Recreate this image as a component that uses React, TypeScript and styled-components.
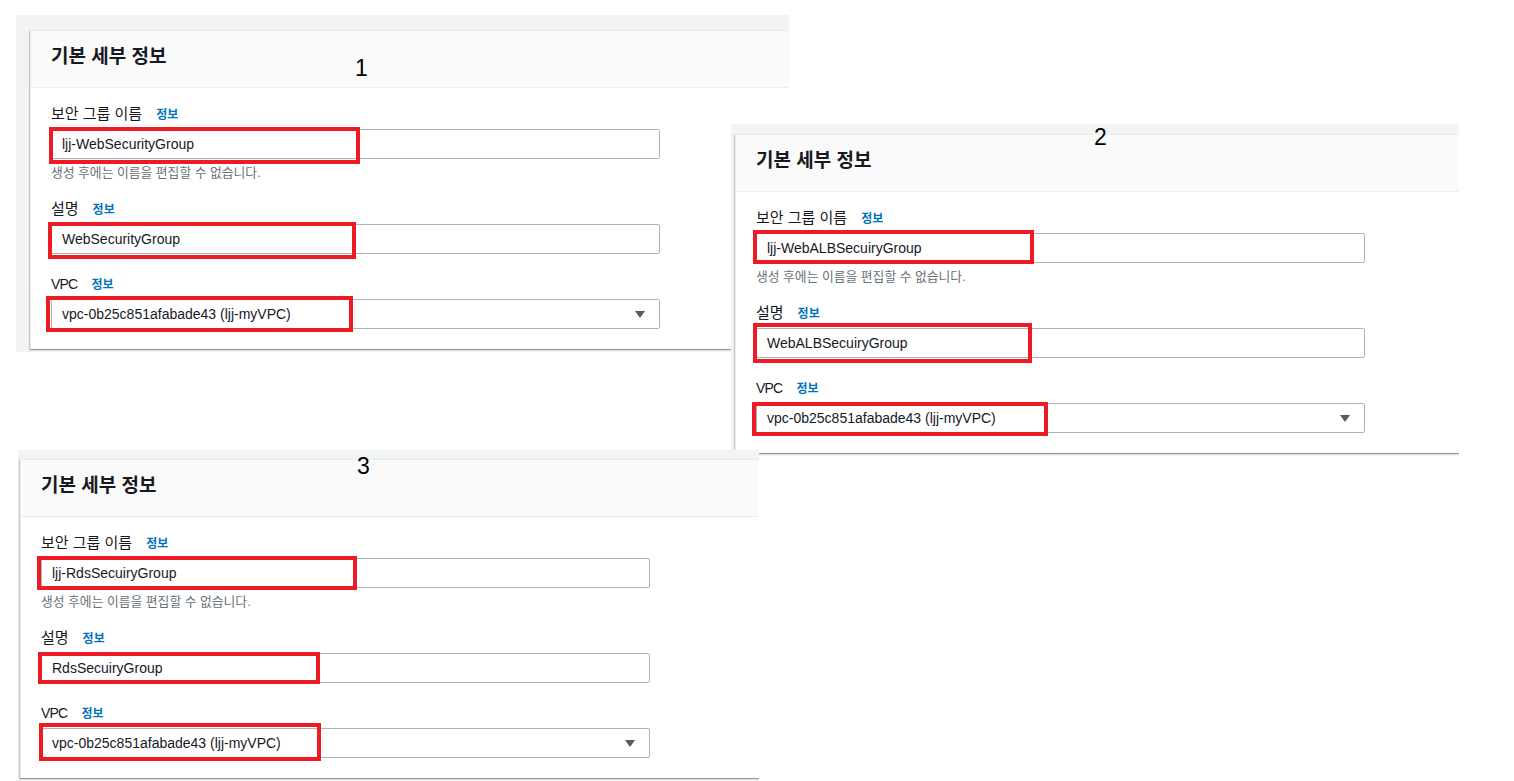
import React, { FC } from 'react';
import styled, { createGlobalStyle } from 'styled-components';

const GlobalStyle = createGlobalStyle`
  html, body {
    margin: 0;
    padding: 0;
    background: #ffffff;
  }
  body {
    font-family: "Liberation Sans", "Noto Sans CJK KR", sans-serif;
    color: #16191f;
  }
`

const Canvas = styled.div`
  position: relative;
  width: 1514px;
  height: 781px;
  overflow: hidden;
  background: #ffffff;
`

// each screenshot clipping pasted onto the canvas
const Shot = styled.section<{ $left: number; $top: number; $width: number; $height: number; $padTop: number; $padLeft: number; $z: number }>`
  position: absolute;
  left: ${p => p.$left}px;
  top: ${p => p.$top}px;
  width: ${p => p.$width}px;
  height: ${p => p.$height}px;
  z-index: ${p => p.$z};
  box-sizing: border-box;
  padding: ${p => p.$padTop}px 0 2px ${p => p.$padLeft}px;
  background: #f2f3f3;
  overflow: hidden;
`

const Card = styled.div`
  margin-right: -30px;
  background: #ffffff;
  border-top: 1px solid #eaeded;
  border-left: 1px solid #eaeded;
  box-shadow: 0 1px 1px 0 rgba(0, 28, 36, 0.3), -1px 1px 1px 0 rgba(0, 28, 36, 0.15);
`

const CardHeader = styled.header`
  height: 22px;
  padding: 15px 20px 19px 20px;
  background: #fafafa;
  border-bottom: 1px solid #eaeded;
`

const CardTitle = styled.h2`
  margin: 0;
  font-size: 19px;
  line-height: 22px;
  font-weight: 700;
  color: #16191f;
`

const CardBody = styled.div`
  display: flex;
  flex-direction: column;
  gap: 19px;
  padding: 15px 20px 20px 20px;
`

const Field = styled.div`
  display: flex;
  flex-direction: column;
`

const LabelRow = styled.div`
  display: flex;
  align-items: baseline;
  gap: 14px;
  height: 22px;
  margin-bottom: 4px;
`

const Label = styled.span<{ $latin?: boolean }>`
  font-size: ${p => (p.$latin ? 14 : 15)}px;
  letter-spacing: ${p => (p.$latin ? -0.8 : 0)}px;
  line-height: 22px;
  color: #16191f;
`

const InfoLink = styled.a`
  font-size: 12px;
  font-weight: 700;
  color: #0073bb;
  text-decoration: none;
`

const Control = styled.div`
  position: relative;
  display: flex;
  align-items: center;
  justify-content: space-between;
  width: 609px;
  height: 30px;
  box-sizing: border-box;
  padding: 0 11px 0 10px;
  border: 1px solid #aab7b8;
  border-radius: 2px;
  background: #ffffff;
  font-size: 14px;
  color: #16191f;
`

const Value = styled.span`
  white-space: nowrap;
`

const Caret = styled.svg`
  flex: none;
  width: 16px;
  height: 16px;
  fill: #545b64;
`

const Help = styled.div`
  height: 15px;
  margin-top: 5px;
  font-size: 12.8px;
  line-height: 17px;
  color: #687078;
`

// red rectangle drawn over the screenshot
const Highlight = styled.span<{ $x: number; $y: number; $w: number; $h: number }>`
  position: absolute;
  left: ${p => p.$x - 1}px;
  top: ${p => p.$y - 1}px;
  width: ${p => p.$w}px;
  height: ${p => p.$h}px;
  box-sizing: border-box;
  border: 4px solid #ed1c24;
  pointer-events: none;
`

const Marker = styled.span<{ $left: number; $top: number }>`
  position: absolute;
  left: ${p => p.$left}px;
  top: ${p => p.$top}px;
  z-index: 10;
  font-size: 23px;
  line-height: 1;
  color: #000000;
`

interface IMark { x: number; y: number; w: number; h: number }

interface IFieldData {
  label: string;
  value: string;
  help?: string;
  select?: boolean;
  mark: IMark;
}

interface IShotData {
  left: number;
  top: number;
  width: number;
  height: number;
  padTop: number;
  padLeft: number;
  fields: IFieldData[];
}

const HELP = '생성 후에는 이름을 편집할 수 없습니다.'
const VPC = 'vpc-0b25c851afabade43 (ljj-myVPC)'

const shots: IShotData[] = [
  {
    left: 16, top: 15, width: 773, height: 337, padTop: 15, padLeft: 14,
    fields: [
      { label: '보안 그룹 이름', value: 'ljj-WebSecurityGroup', help: HELP, mark: { x: -2, y: -2, w: 311, h: 37 } },
      { label: '설명', value: 'WebSecurityGroup', mark: { x: -3, y: -2, w: 308, h: 37 } },
      { label: 'VPC', value: VPC, select: true, mark: { x: -5, y: -3, w: 307, h: 36 } },
    ],
  },
  {
    left: 731, top: 124, width: 728, height: 332, padTop: 10, padLeft: 4,
    fields: [
      { label: '보안 그룹 이름', value: 'ljj-WebALBSecuiryGroup', help: HELP, mark: { x: -3, y: -3, w: 281, h: 34 } },
      { label: '설명', value: 'WebALBSecuiryGroup', mark: { x: -3, y: -5, w: 279, h: 40 } },
      { label: 'VPC', value: VPC, select: true, mark: { x: -4, y: -1, w: 296, h: 34 } },
    ],
  },
  {
    left: 18, top: 450, width: 741, height: 340, padTop: 9, padLeft: 2,
    fields: [
      { label: '보안 그룹 이름', value: 'ljj-RdsSecuiryGroup', help: HELP, mark: { x: -4, y: -2, w: 320, h: 34 } },
      { label: '설명', value: 'RdsSecuiryGroup', mark: { x: -3, y: -1, w: 282, h: 32 } },
      { label: 'VPC', value: VPC, select: true, mark: { x: -2, y: -5, w: 282, h: 38 } },
    ],
  },
]

const markers = [
  { text: '1', left: 355, top: 57 },
  { text: '2', left: 1094, top: 126 },
  { text: '3', left: 357, top: 455 },
]

const FormField: FC<{ field: IFieldData }> = ({ field }) => (
  <Field>
    <LabelRow>
      <Label $latin={/^[A-Za-z]+$/.test(field.label)}>{field.label}</Label>
      <InfoLink>정보</InfoLink>
    </LabelRow>
    <Control>
      <Value>{field.value}</Value>
      {field.select && (
        <Caret viewBox="0 0 16 16">
          <path d="M3 5h10l-5 7z" />
        </Caret>
      )}
      <Highlight $x={field.mark.x} $y={field.mark.y} $w={field.mark.w} $h={field.mark.h} />
    </Control>
    {field.help && <Help>{field.help}</Help>}
  </Field>
)

export default function App() {
  return (
    <>
      <GlobalStyle />
      <Canvas>
        {shots.map((s, i) => (
          <Shot key={i} $left={s.left} $top={s.top} $width={s.width} $height={s.height} $padTop={s.padTop} $padLeft={s.padLeft} $z={i + 1}>
            <Card>
              <CardHeader>
                <CardTitle>기본 세부 정보</CardTitle>
              </CardHeader>
              <CardBody>
                {s.fields.map(f => <FormField key={f.label} field={f} />)}
              </CardBody>
            </Card>
          </Shot>
        ))}
        {markers.map(m => (
          <Marker key={m.text} $left={m.left} $top={m.top}>{m.text}</Marker>
        ))}
      </Canvas>
    </>
  )
}
